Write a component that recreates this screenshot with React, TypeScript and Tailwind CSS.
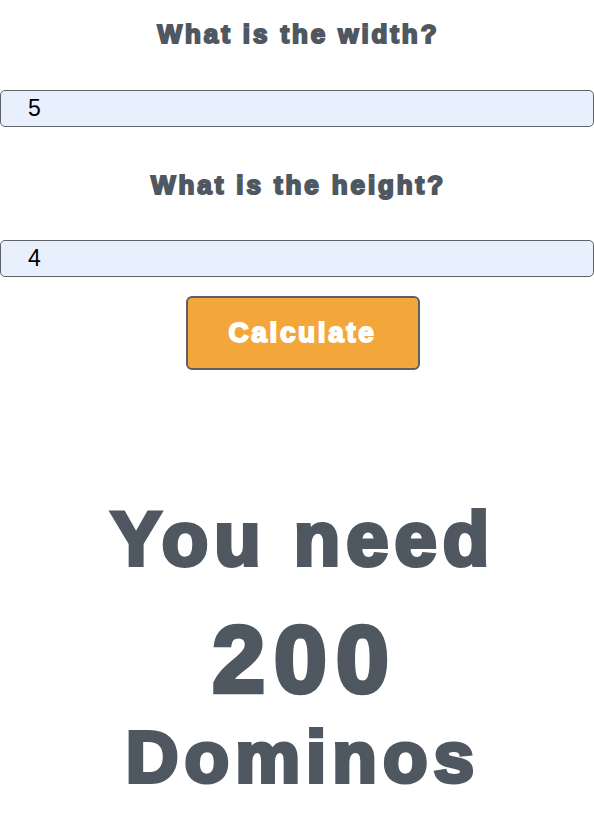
import { useState } from "react";

const heavy =
  "font-['Liberation_Sans',Arial,sans-serif] font-bold text-[#4f5760]";

export default function App() {
  const [width, setWidth] = useState("5");
  const [height, setHeight] = useState("4");
  const [total, setTotal] = useState(200);

  // each square needs 10 dominos
  const calculate = () => {
    setTotal(Number(width) * Number(height) * 10);
  };

  return (
    <div className="flex min-h-[834px] w-[594px] flex-col items-center bg-white font-['Liberation_Sans',Arial,sans-serif]">
      <h2 className={`${heavy} ml-[3px] mt-[19px] text-[26px] leading-[30px] tracking-[2.9px] [-webkit-text-stroke:2px_#4f5760]`}>
        What is the width?
      </h2>
      <input
        value={width}
        onChange={(e) => setWidth(e.target.value)}
        className="mt-[41px] h-[37px] w-full rounded-[5px] border border-[#5f6368] bg-[#e8f0fe] px-[27px] text-[23px] text-black outline-none"
      />
      <h2 className={`${heavy} ml-[3px] mt-[43px] text-[26px] leading-[30px] tracking-[2.9px] [-webkit-text-stroke:2px_#4f5760]`}>
        What is the height?
      </h2>
      <input
        value={height}
        onChange={(e) => setHeight(e.target.value)}
        className="mt-[40px] h-[37px] w-full rounded-[5px] border border-[#5f6368] bg-[#e8f0fe] px-[27px] text-[23px] text-black outline-none"
      />
      <button
        onClick={calculate}
        className="ml-[11px] mt-[19px] h-[74px] w-[234px] rounded-[6px] border-2 border-[#5b6066] bg-[#f3a73b] text-[28px] font-bold tracking-[2.6px] text-white [-webkit-text-stroke:1.8px_white]"
      >
        Calculate
      </button>
      <div className={`${heavy} ml-[12px] mt-[127px] text-[76px] leading-[84px] tracking-[6px] [-webkit-text-stroke:4px_#4f5760]`}>
        You need
      </div>
      <div className={`${heavy} ml-[16px] mt-[30px] text-[95px] leading-[96px] tracking-[9px] [-webkit-text-stroke:4.5px_#4f5760]`}>
        {total}
      </div>
      <div className={`${heavy} ml-[12px] mt-[8px] text-[73px] leading-[84px] tracking-[6px] [-webkit-text-stroke:4px_#4f5760]`}>
        Dominos
      </div>
    </div>
  );
}
